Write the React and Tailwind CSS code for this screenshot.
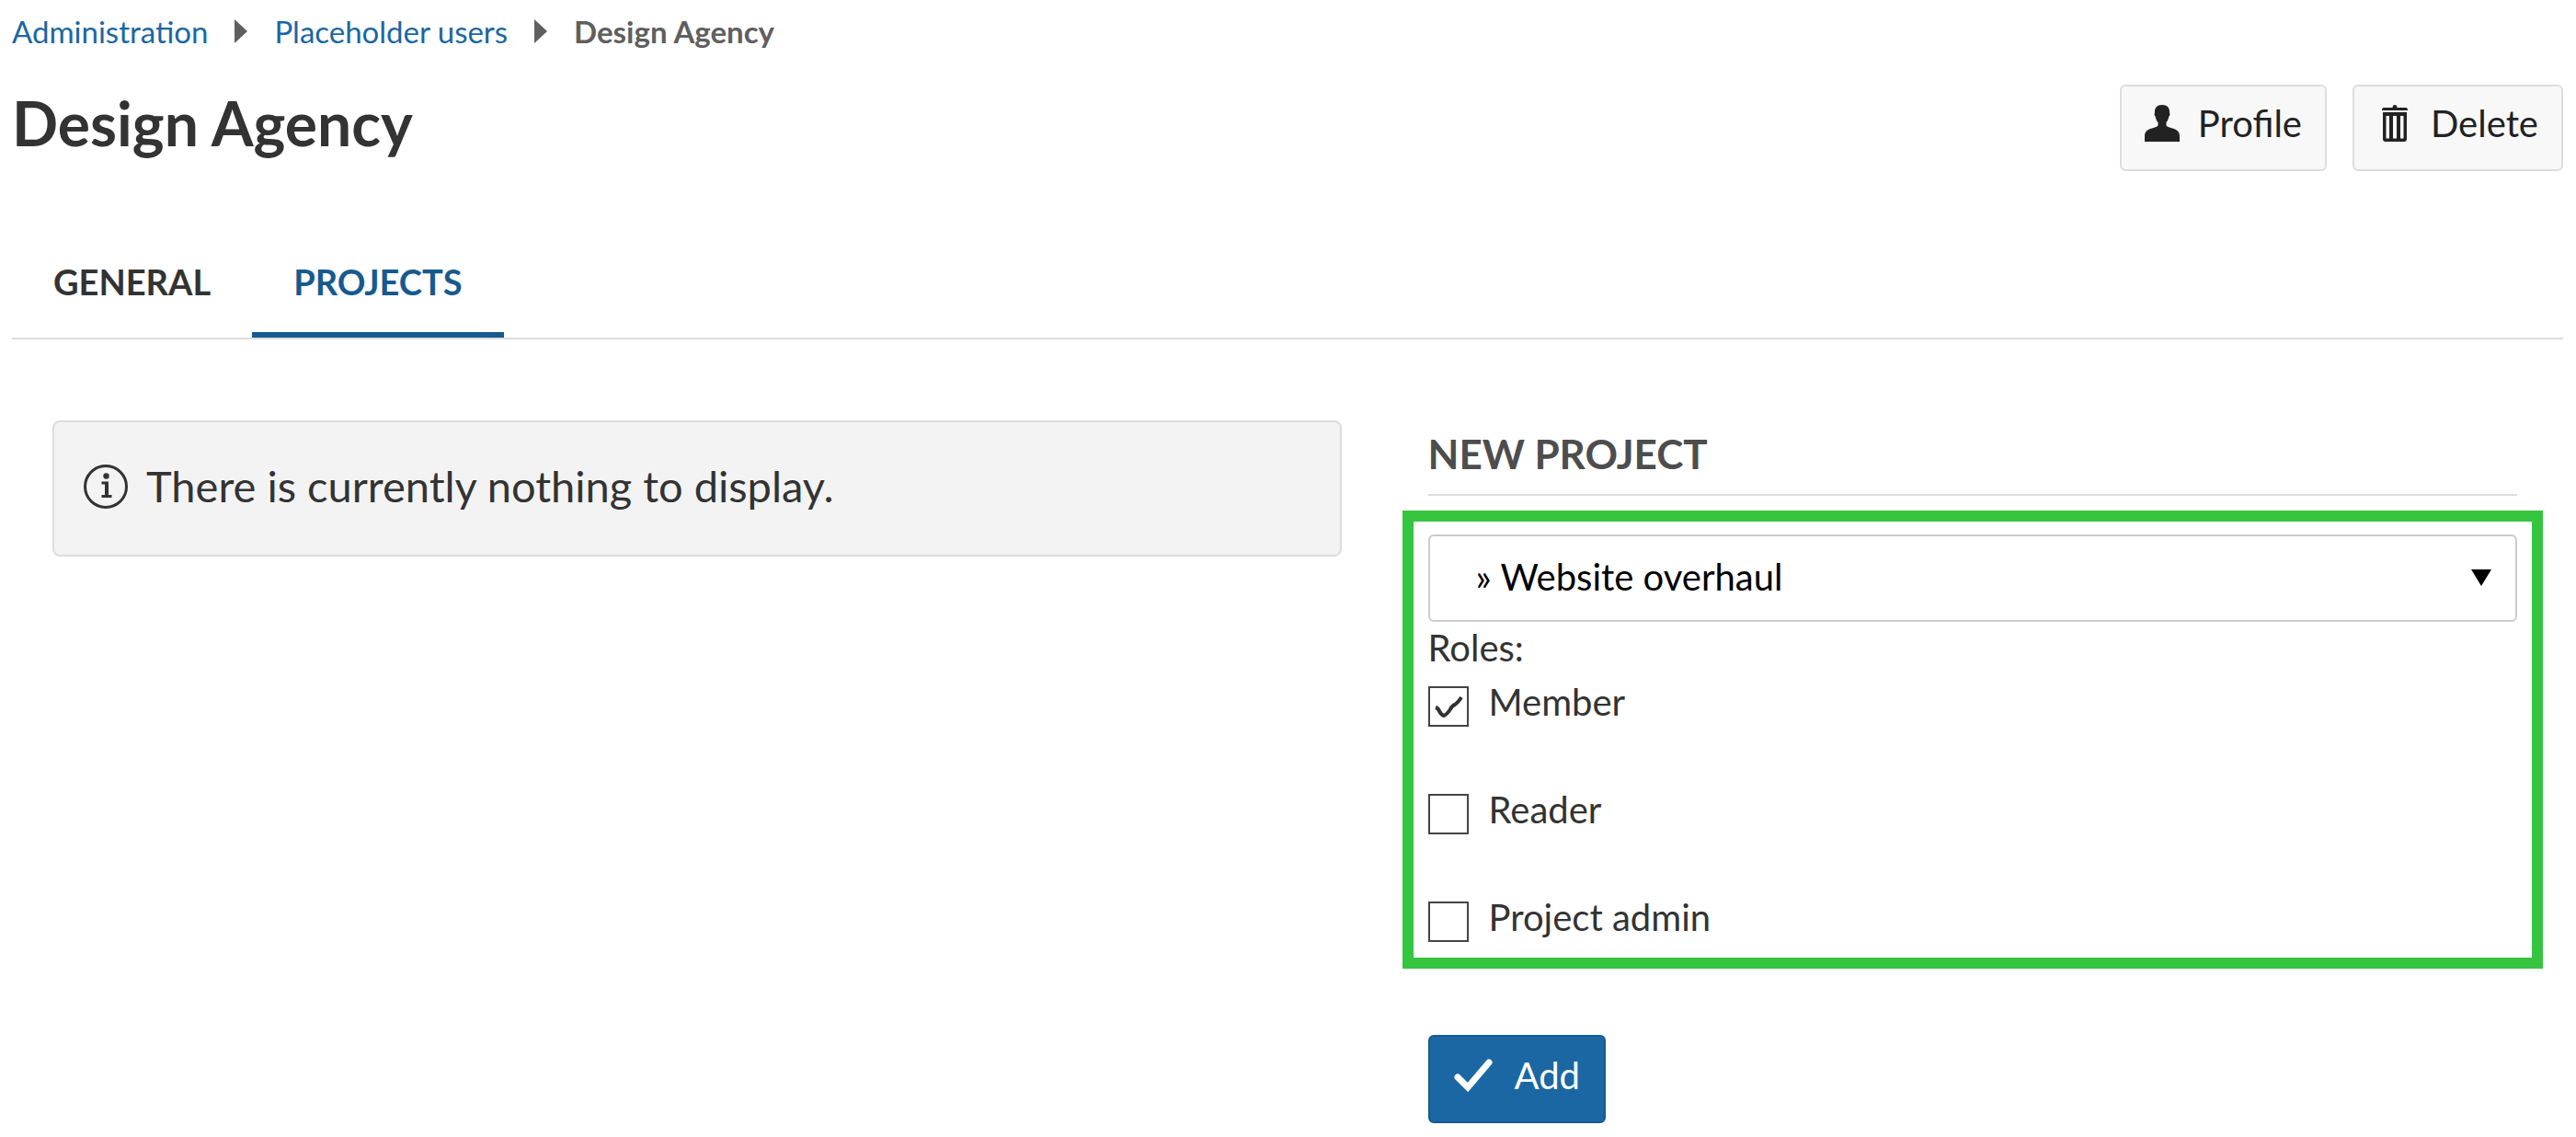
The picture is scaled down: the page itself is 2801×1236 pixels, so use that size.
import { useState } from "react";

function Crumb({ href, children }) {
  return (
    <>
      <a href={href} className="text-[#1a67a3] hover:underline">{children}</a>
      <svg aria-hidden="true" viewBox="0 0 14 26" className="h-[26px] w-[14px] shrink-0 fill-[#5f5f5f]">
        <path d="M0 0 14 13 0 26Z" />
      </svg>
    </>
  );
}

function UserIcon() {
  return (
    <svg aria-hidden="true" viewBox="0 0 38 40" className="h-10 w-[38px] fill-[#222]">
      <path d="M19 0c-5.500 0-8.400 3.200-8 8.500-.8.800-.5 3.400.7 4.300.4 2.600 1.300 4.700 2.800 6.200v3.500c-1 1.600-4 2.300-7.500 3.300C2.500 27.300 0 29.500 0 34v6h38v-6c0-4.500-2.500-6.700-7-8.200-3.500-1-6.500-1.700-7.500-3.300V19c1.500-1.500 2.400-3.600 2.800-6.200 1.200-.9 1.500-3.500.7-4.300C27.400 3.200 24.500 0 19 0Z" />
    </svg>
  );
}

function TrashIcon() {
  return (
    <svg aria-hidden="true" viewBox="0 0 28 40" className="h-10 w-[38px] fill-[#222]">
      <path fillRule="evenodd" d="M11.500 3q0-3 2.500-3t2.500 3H26q2 0 2 3H0q0-3 2-3ZM1 8h26v29q0 3-3 3H4q-3 0-3-3ZM4.500 12v24.500H8V12ZM12 12v24.500h4V12ZM20 12v24.500h3.500V12Z" />
    </svg>
  );
}

function InfoIcon() {
  return (
    <svg aria-hidden="true" viewBox="0 0 48 48" className="size-12 shrink-0 fill-[#333]">
      <circle cx="24" cy="24" r="22.500" fill="none" stroke="#333" strokeWidth="3" />
      <circle cx="24.500" cy="12.500" r="3.200" />
      <path d="M19.500 18.500H27V33h3.500v3h-11v-3H23V21.500h-3.500Z" />
    </svg>
  );
}

function CheckIcon() {
  return (
    <svg aria-hidden="true" viewBox="0 0 42 36" className="h-9 w-[42px] fill-none stroke-white">
      <path d="M4 20 15 31 38 4" strokeWidth="7" strokeLinecap="round" />
    </svg>
  );
}

function ToolbarButton({ icon, children }) {
  return (
    <button type="button" className="flex h-[94px] items-center rounded-md border-2 border-[#ddd] bg-[#f8f8f8] px-[25px] pb-[10px] leading-[60px] text-[#222]">
      {icon}
      <span className="pl-5">{children}</span>
    </button>
  );
}

function Role({ name, checked, onChange }) {
  return (
    <label className="flex h-[45px] items-start gap-[22px] text-[#333]">
      <span className="relative mt-1 block size-11 shrink-0">
        <input
          type="checkbox"
          checked={checked}
          onChange={onChange}
          className="block size-11 appearance-none border-2 border-[#444] bg-white"
        />
        {checked && (
          <svg aria-hidden="true" viewBox="0 0 44 44" className="pointer-events-none absolute inset-0 size-11 fill-none stroke-[#333]">
            <path d="M8 23q3 1 4 4 2 4 5 5 3-1 7-7 2-4 5-5 4-3 7-8" strokeWidth="4" />
          </svg>
        )}
      </span>
      <span className="leading-[42px]">{name}</span>
    </label>
  );
}

export default function App() {
  const [roles, setRoles] = useState({ Member: true, Reader: false, "Project admin": false });

  return (
    <div className="bg-white pr-[14px] pl-[13px] font-['Lato',sans-serif] text-[40px] text-[#333]">
      <nav aria-label="Breadcrumb" className="flex items-center gap-[29px] pt-3 text-[33px] leading-[44px]">
        <Crumb href="#administration">Administration</Crumb>
        <Crumb href="#placeholder-users">Placeholder users</Crumb>
        <span className="font-bold text-[#5f5f5f]">Design Agency</span>
      </nav>

      <header className="flex items-start justify-between pt-9">
        <h1 className="text-[66px] leading-[84px] font-bold text-[#333]">Design Agency</h1>
        <div className="flex gap-7">
          <ToolbarButton icon={<UserIcon />}>Profile</ToolbarButton>
          <ToolbarButton icon={<TrashIcon />}>Delete</ToolbarButton>
        </div>
      </header>

      <nav aria-label="Sections" className="mt-[82px] flex border-b-2 border-[#ddd] text-[38px] font-bold">
        <a href="#general" className="h-[99px] px-[45px] pt-2 leading-[60px] text-[#333]">GENERAL</a>
        <a href="#projects" aria-current="page" className="h-[99px] border-b-6 border-[#175a8e] px-[45px] pt-2 leading-[60px] text-[#175a8e]">PROJECTS</a>
      </nav>

      <main className="grid grid-cols-[1401fr_1184fr] items-start gap-x-[94px] pt-[88px] pr-[50px] pl-11">
        <div className="flex h-[148px] items-center gap-5 rounded-lg border-2 border-[#ddd] bg-[#f3f3f3] px-8 pb-1 text-[47px] leading-[60px]">
          <InfoIcon />
          <p className="pb-[3px]">There is currently nothing to display.</p>
        </div>

        <form onSubmit={(e) => e.preventDefault()}>
          <h2 className="border-b-2 border-[#ddd] pt-[6px] pb-[14px] text-[44px] leading-[60px] font-bold text-[#4d4d4d]">NEW PROJECT</h2>

          <div className="-mx-7 mt-4 border-12 border-[#35c53f] px-4 pt-[14px] pb-5">
            <div className="relative">
              <select aria-label="Project" className="block h-[95px] w-full appearance-none rounded-md border-2 border-[#ccc] bg-white pr-20 pb-1 pl-[50px] text-black">
                <option>» Website overhaul</option>
              </select>
              <svg aria-hidden="true" viewBox="0 0 22 18" className="pointer-events-none absolute top-[38px] right-7 h-[18px] w-[22px]">
                <path d="M0 0H22L11 18Z" />
              </svg>
            </div>
            <fieldset>
              <legend className="mb-[10px] leading-[56px]">Roles:</legend>
              <div className="flex flex-col gap-[72px]">
                {Object.keys(roles).map((name) => (
                  <Role key={name} name={name} checked={roles[name]} onChange={() => setRoles({ ...roles, [name]: !roles[name] })} />
                ))}
              </div>
            </fieldset>
          </div>

          <button type="submit" className="mt-[72px] flex h-24 items-center gap-6 rounded-md border-2 border-[#175a8e] bg-[#1a67a3] px-[26px] pb-2 leading-[60px] text-white">
            <CheckIcon />
            <span>Add</span>
          </button>
        </form>
      </main>
    </div>
  );
}
